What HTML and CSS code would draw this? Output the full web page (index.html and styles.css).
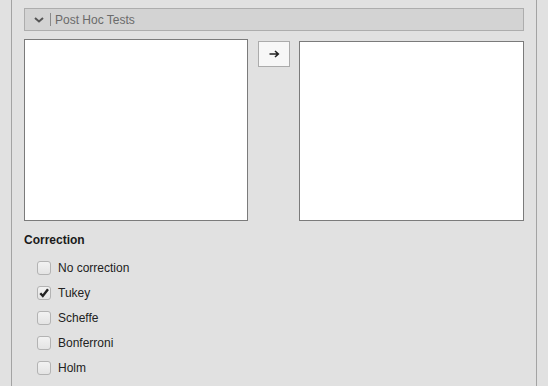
FILE: index.html
```html
<!DOCTYPE html>
<html>
<head>
<meta charset="utf-8">
<link rel="stylesheet" href="styles.css">
</head>
<body>
<div class="panel">
  <div class="section-header">
    <svg class="chevron" width="10" height="6" viewBox="0 0 10 6"><path d="M1 1 L5 4.5 L9 1" fill="none" stroke="#555" stroke-width="2"/></svg>
    <span class="sep"></span>
    <span class="title">Post Hoc Tests</span>
  </div>
  <div class="lists">
    <div class="listbox left"></div>
    <div class="btn-col">
      <button class="arrow-btn">
        <svg width="11" height="8" viewBox="0 0 11 8"><path d="M0.5 4 H9 M6 1 L9.3 4 L6 7" fill="none" stroke="#222" stroke-width="1.6"/></svg>
      </button>
    </div>
    <div class="listbox right"></div>
  </div>
  <div class="group-label">Correction</div>
  <div class="options">
    <label class="opt"><span class="cb"></span><span>No correction</span></label>
    <label class="opt"><span class="cb checked"><svg width="12" height="12" viewBox="0 0 12 12"><path d="M2.3 6.3 L4.8 9 L10 2.2" fill="none" stroke="#222" stroke-width="2.4"/></svg></span><span>Tukey</span></label>
    <label class="opt"><span class="cb"></span><span>Scheffe</span></label>
    <label class="opt"><span class="cb"></span><span>Bonferroni</span></label>
    <label class="opt"><span class="cb"></span><span>Holm</span></label>
  </div>
</div>
</body>
</html>
```
FILE: styles.css
```css
html, body {
  margin: 0;
  padding: 0;
  background: #e1e1e1;
  font-family: "Liberation Sans", Arial, sans-serif;
  font-size: 12px;
  color: #222;
}
.panel {
  margin-left: 11px;
  width: 526px;
  height: 386px;
  border-left: 1px solid #a3a3a3;
  border-right: 1px solid #a3a3a3;
  padding: 8px 12px 0 12px;
  box-sizing: border-box;
}
.section-header {
  height: 23px;
  box-sizing: border-box;
  border: 1px solid #adadad;
  background: #d3d3d3;
  display: flex;
  align-items: center;
  padding-left: 9px;
}
.chevron {
  display: block;
  margin-top: 1px;
}
.sep {
  width: 1px;
  height: 13px;
  background: #8a8a8a;
  margin-left: 6px;
  margin-right: 4px;
}
.title {
  color: #6a6a6a;
  font-size: 12px;
}
.lists {
  display: flex;
  margin-top: 8px;
}
.listbox {
  background: #fff;
  border: 1px solid #7b7b7b;
  box-sizing: border-box;
}
.listbox.left {
  width: 224px;
  height: 182px;
}
.listbox.right {
  width: 225px;
  height: 180px;
  margin-top: 2px;
}
.btn-col {
  margin-left: 10px;
  margin-right: 9px;
  padding-top: 2px;
}
.arrow-btn {
  width: 32px;
  height: 26px;
  box-sizing: border-box;
  background: #f7f7f7;
  border: 1px solid #ababab;
  border-radius: 0;
  padding: 0;
  display: flex;
  align-items: center;
  justify-content: center;
}
.arrow-btn svg {
  display: block;
}
.group-label {
  font-weight: bold;
  margin-top: 12px;
  line-height: 15px;
  color: #1a1a1a;
}
.options {
  display: flex;
  flex-direction: column;
  gap: 11px;
  margin-top: 13px;
  padding-left: 13px;
}
.opt {
  display: flex;
  align-items: center;
  height: 14px;
  line-height: 14px;
  color: #222;
}
.cb {
  width: 14px;
  height: 14px;
  box-sizing: border-box;
  border: 1px solid #b3b3b3;
  border-radius: 3px;
  background: linear-gradient(#f2f2f2, #e4e4e4);
  margin-right: 7px;
  display: flex;
  align-items: center;
  justify-content: center;
}
.cb svg {
  display: block;
}
```
